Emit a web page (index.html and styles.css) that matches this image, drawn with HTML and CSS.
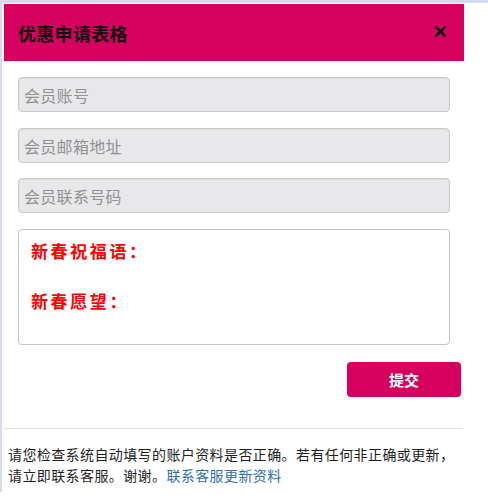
FILE: index.html
```html
<!DOCTYPE html>
<html lang="zh-CN">
<head>
<meta charset="utf-8">
<title>优惠申请表格</title>
<link rel="stylesheet" href="styles.css">
</head>
<body>
<div class="frame">
  <div class="modal">
    <div class="header">
      <h1 class="title">优惠申请表格</h1>
      <span class="close" aria-label="关闭">
        <svg width="11" height="11" viewBox="0 0 11 11"><path d="M1 1 L10 10 M10 1 L1 10" stroke="#111" stroke-width="2.6" stroke-linecap="square"/></svg>
      </span>
    </div>
    <div class="body">
      <input class="field" type="text" placeholder="会员账号">
      <input class="field" type="text" placeholder="会员邮箱地址">
      <input class="field" type="text" placeholder="会员联系号码">
      <div class="message">
        <p class="msg-line">新春祝福语：</p>
        <p class="msg-line msg-gap">新春愿望：</p>
      </div>
      <div class="actions">
        <button class="submit" type="button">提交</button>
      </div>
    </div>
    <div class="divider"></div>
    <p class="note">请您检查系统自动填写的账户资料是否正确。若有任何非正确或更新，<br>请立即联系客服。谢谢。<a class="link" href="#">联系客服更新资料</a></p>
  </div>
</div>
</body>
</html>
```

FILE: styles.css
```css
html, body {
  margin: 0;
  padding: 0;
  background: #fff;
}
body {
  font-family: "Noto Sans CJK SC", "Liberation Sans", sans-serif;
}
.frame {
  border-top: 3px solid #d3dce8;
  border-left: 2px solid #d3dce8;
  padding-top: 1px;
  padding-left: 2px;
  min-height: 492px;
  box-sizing: border-box;
}
.modal {
  width: 460px;
}
.header {
  height: 57px;
  background: #d6005e;
  display: flex;
  align-items: center;
  justify-content: space-between;
  padding: 0 18px 0 14px;
}
.title {
  margin: 0;
  font-size: 18px;
  font-weight: 700;
  color: #0e0e0e;
  letter-spacing: 0.3px;
}
.close {
  display: flex;
  width: 11px;
  height: 11px;
  margin-top: -2px;
}
.body {
  padding: 16px 14px 0;
  display: flex;
  flex-direction: column;
}
.field {
  display: block;
  box-sizing: border-box;
  width: 432px;
  height: 35px;
  margin: 0 0 16px;
  padding: 0 5px;
  border: 1px solid #c9c9cb;
  border-radius: 4px;
  background: #e8e8ea;
  font-family: "Noto Sans CJK SC", sans-serif;
  font-size: 16px;
  letter-spacing: 0.3px;
  color: #555;
  box-shadow: inset 0 1px 1px rgba(0,0,0,0.05);
}
.field:nth-of-type(2) {
  margin-bottom: 15px;
}
.field::placeholder {
  color: #919191;
}
.message {
  box-sizing: border-box;
  height: 116px;
  border: 1px solid #c6c6c6;
  border-radius: 4px;
  padding: 8px 12px;
  background: #fff;
}
.msg-line {
  margin: 0;
  font-size: 17px;
  line-height: 26px;
  font-weight: 700;
  color: #ff0000;
  letter-spacing: 2.6px;
}
.msg-gap {
  margin-top: 24px;
}
.actions {
  display: flex;
  justify-content: flex-end;
  margin: 17px -11px 0 0;
}
.submit {
  width: 114px;
  height: 35px;
  border: none;
  border-radius: 4px;
  background: #d6005e;
  color: #fff;
  font-family: "Noto Sans CJK SC", sans-serif;
  font-size: 15px;
  font-weight: 700;
  cursor: pointer;
}
.divider {
  margin-top: 31px;
  height: 1px;
  background: #e3e3e3;
  width: 459px;
}
.note {
  margin: 0;
  padding: 15px 0 0 4px;
  font-size: 14px;
  line-height: 21px;
  letter-spacing: 0.4px;
  color: #1e1e1e;
  white-space: nowrap;
}
.link {
  color: #2f6fb3;
  text-decoration: none;
}
```
